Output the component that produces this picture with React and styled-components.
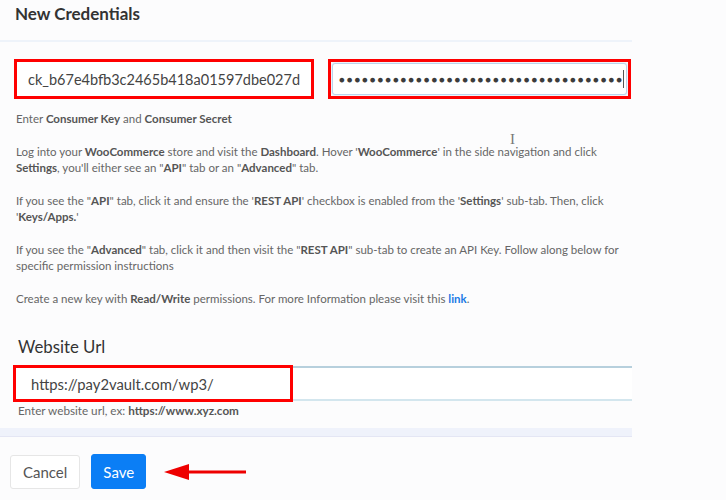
import React from 'react';
import styled, { createGlobalStyle } from 'styled-components';

const GlobalStyle = createGlobalStyle`
  html, body {
    margin: 0;
    padding: 0;
    background: #fcfcfd;
  }
  body {
    font-family: Lato, "Open Sans", sans-serif;
    color: #333;
  }
`;

const Page = styled.div`
  position: relative;
  width: 726px;
  height: 500px;
  overflow: hidden;
`;

const Panel = styled.div`
  width: 632px;
`;

const Header = styled.div`
  height: 42px;
  padding: 0 15px;
  display: flex;
  align-items: flex-start;
  border-bottom: 2px solid #eef3fa;
  box-sizing: border-box;
`;

const Title = styled.h2`
  margin: 4px 0 0;
  font-size: 17px;
  font-weight: 700;
  color: #333;
  line-height: 20px;
`;

const Body = styled.div`
  padding: 17px 0 0 16px;
`;

const CredRow = styled.div`
  display: flex;
  gap: 14px;
  margin-left: -2px;
`;

const Highlight = styled.div`
  border: 3px solid #f00;
  width: ${(p) => p.$w}px;
  height: 40px;
  box-sizing: border-box;
  padding: ${(p) => (p.$inset ? '1px' : '0')};
  display: flex;
`;

const Input = styled.div`
  flex: 1;
  display: flex;
  align-items: center;
  box-sizing: border-box;
  background: #fff;
  padding-left: ${(p) => p.$pad}px;
  font-size: 14.5px;
  color: #444;
  border: ${(p) => (p.$framed ? '1px solid #b9d4ec' : 'none')};
  border-radius: ${(p) => (p.$framed ? '3px' : '0')};
  box-shadow: ${(p) => (p.$framed ? '0 0 2px rgba(120,170,220,0.4)' : 'none')};
  overflow: hidden;
  white-space: nowrap;
`;

const Dots = styled.span`
  font-size: 9.5px;
  letter-spacing: 2px;
  color: #3c3c3c;
`;

const Caret = styled.span`
  display: inline-block;
  width: 1px;
  height: 18px;
  background: #555;
  margin-left: -1px;
`;

const Note = styled.p`
  margin: ${(p) => p.$top ?? 17}px 0 0;
  width: 616px;
  font-size: 11.5px;
  line-height: 16px;
  color: #666;
  b {
    font-weight: 700;
    color: #555;
  }
  a {
    color: #1a7ae6;
    font-weight: 700;
    text-decoration: none;
  }
`;

const FieldLabel = styled.div`
  margin: 31px 0 0 2px;
  font-size: 16.8px;
  line-height: 18px;
  color: #333;
`;

const UrlField = styled.div`
  position: relative;
  margin: 10px 0 0 -1px;
  height: 35px;
  display: flex;
  align-items: center;
  padding-left: 16px;
  border-top: 2px solid #b7d0dd;
  border-bottom: 2px solid #d3e6ee;
  background: #fff;
  box-sizing: border-box;
  font-size: 14.8px;
  color: #444;
`;

const UrlMark = styled.div`
  position: absolute;
  left: -2px;
  top: -3px;
  width: 280px;
  height: 37px;
  border: 3px solid #f00;
  box-sizing: border-box;
`;

const Hint = styled.div`
  margin: 1px 0 0 2px;
  font-size: 11.7px;
  line-height: 16px;
  color: #666;
  b {
    color: #555;
    font-weight: 700;
  }
`;

const Band = styled.div`
  margin-top: 10px;
  height: 8px;
  background: #eff2fb;
  border-bottom: 1px solid #e4e6f4;
`;

const Footer = styled.div`
  display: flex;
  align-items: center;
  gap: 11px;
  padding: 17px 0 0 10px;
`;

const Button = styled.button`
  height: ${(p) => (p.$primary ? 35 : 34)}px;
  padding: 0 ${(p) => (p.$primary ? 11 : 12)}px;
  font-family: Lato, "Open Sans", sans-serif;
  font-size: 15px;
  border-radius: 3px;
  cursor: pointer;
  border: 1px solid ${(p) => (p.$primary ? '#0b7ef5' : '#e6e6e6')};
  background: ${(p) => (p.$primary ? '#0b7ef5' : '#fff')};
  color: ${(p) => (p.$primary ? '#fff' : '#555')};
  font-weight: 400;
`;

const Arrow = styled.svg`
  margin-left: 7px;
`;

const Cursor = styled.div`
  position: absolute;
  left: 510px;
  top: 131px;
  font-family: "Liberation Serif", serif;
  font-size: 15px;
  color: #777;
`;

const App = () => {
  return (
    <Page>
      <GlobalStyle />
      <Panel>
        <Header>
          <Title>New Credentials</Title>
        </Header>
        <Body>
          <CredRow>
            <Highlight $w={300}>
              <Input $pad={11}>ck_b67e4bfb3c2465b418a01597dbe027d</Input>
            </Highlight>
            <Highlight $w={303} $inset>
              <Input $framed $pad={6}>
                <Dots>{'●'.repeat(37)}</Dots>
                <Caret />
              </Input>
            </Highlight>
          </CredRow>
          <Note $top={12}>
            Enter <b>Consumer Key</b> and <b>Consumer Secret</b>
          </Note>
          <Note>
            Log into your <b>WooCommerce</b> store and visit the <b>Dashboard</b>. Hover '<b>WooCommerce</b>' in the side navigation and click <b>Settings</b>, you'll either see an "<b>API</b>" tab or an "<b>Advanced</b>" tab.
          </Note>
          <Note>
            If you see the "<b>API</b>" tab, click it and ensure the '<b>REST API</b>' checkbox is enabled from the '<b>Settings</b>' sub-tab. Then, click '<b>Keys/Apps.</b>'
          </Note>
          <Note>
            If you see the "<b>Advanced</b>" tab, click it and then visit the "<b>REST API</b>" sub-tab to create an API Key. Follow along below for specific permission instructions
          </Note>
          <Note>
            Create a new key with <b>Read/Write</b> permissions. For more Information please visit this <a href="#">link</a>.
          </Note>
          <FieldLabel>Website Url</FieldLabel>
          <UrlField>
            https://pay2vault.com/wp3/
            <UrlMark />
          </UrlField>
          <Hint>
            Enter website url, ex: <b>https://www.xyz.com</b>
          </Hint>
        </Body>
        <Band />
      </Panel>
      <Footer>
        <Button>Cancel</Button>
        <Button $primary>Save</Button>
        <Arrow width="82" height="18" viewBox="0 0 82 18">
          <polygon points="0,9 25,1 25,17" fill="#e00" />
          <rect x="22" y="7.5" width="60" height="3" fill="#e00" />
        </Arrow>
      </Footer>
      <Cursor>I</Cursor>
    </Page>
  );
};

export default App;
